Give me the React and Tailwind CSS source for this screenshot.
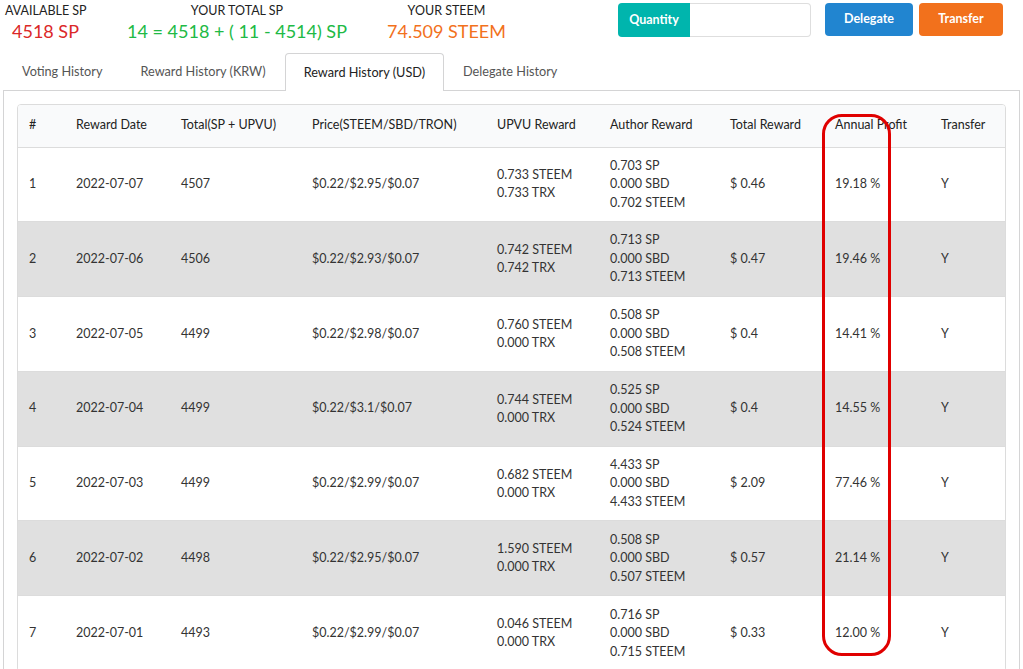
import React from "react"

const ROWS = [
  { n: 1, date: "2022-07-07", total: "4507", price: "$0.22/$2.95/$0.07", upvu: ["0.733 STEEM", "0.733 TRX"], author: ["0.703 SP", "0.000 SBD", "0.702 STEEM"], reward: "$ 0.46", profit: "19.18 %" },
  { n: 2, date: "2022-07-06", total: "4506", price: "$0.22/$2.93/$0.07", upvu: ["0.742 STEEM", "0.742 TRX"], author: ["0.713 SP", "0.000 SBD", "0.713 STEEM"], reward: "$ 0.47", profit: "19.46 %" },
  { n: 3, date: "2022-07-05", total: "4499", price: "$0.22/$2.98/$0.07", upvu: ["0.760 STEEM", "0.000 TRX"], author: ["0.508 SP", "0.000 SBD", "0.508 STEEM"], reward: "$ 0.4", profit: "14.41 %" },
  { n: 4, date: "2022-07-04", total: "4499", price: "$0.22/$3.1/$0.07", upvu: ["0.744 STEEM", "0.000 TRX"], author: ["0.525 SP", "0.000 SBD", "0.524 STEEM"], reward: "$ 0.4", profit: "14.55 %" },
  { n: 5, date: "2022-07-03", total: "4499", price: "$0.22/$2.99/$0.07", upvu: ["0.682 STEEM", "0.000 TRX"], author: ["4.433 SP", "0.000 SBD", "4.433 STEEM"], reward: "$ 2.09", profit: "77.46 %" },
  { n: 6, date: "2022-07-02", total: "4498", price: "$0.22/$2.95/$0.07", upvu: ["1.590 STEEM", "0.000 TRX"], author: ["0.508 SP", "0.000 SBD", "0.507 STEEM"], reward: "$ 0.57", profit: "21.14 %" },
  { n: 7, date: "2022-07-01", total: "4493", price: "$0.22/$2.99/$0.07", upvu: ["0.046 STEEM", "0.000 TRX"], author: ["0.716 SP", "0.000 SBD", "0.715 STEEM"], reward: "$ 0.33", profit: "12.00 %" },
]

const COLS = [
  { label: "#", w: "w-[47px]" },
  { label: "Reward Date", w: "w-[105px]" },
  { label: "Total(SP + UPVU)", w: "w-[131px]" },
  { label: "Price(STEEM/SBD/TRON)", w: "w-[185px]" },
  { label: "UPVU Reward", w: "w-[113px]" },
  { label: "Author Reward", w: "w-[120px]" },
  { label: "Total Reward", w: "w-[105px]" },
  { label: "Annual Profit", w: "w-[106px]" },
  { label: "Transfer", w: "w-[76px]" },
]

const TABS = ["Voting History", "Reward History (KRW)", "Reward History (USD)", "Delegate History"]

export default function App() {
  return (
    <div className="relative w-[1023px] h-[669px] overflow-hidden bg-white text-[#333] font-['Lato','Liberation_Sans',sans-serif]">
      {/* top summary */}
      <div className="flex items-start h-[46px]">
        <div className="pl-[5px] w-[110px] pt-[3px]">
          <div className="text-[12.5px] leading-[16px] text-[#222]">AVAILABLE SP</div>
          <div className="pl-[7px] text-[18px] leading-[24px] text-[#db2828]">4518 SP</div>
        </div>
        <div className="w-[254px] pt-[3px] flex flex-col items-center">
          <div className="text-[12.5px] leading-[16px] text-[#222]">YOUR TOTAL SP</div>
          <div className="text-[18px] leading-[24px] text-[#21ba45]">14 = 4518 + ( 11 - 4514) SP</div>
        </div>
        <div className="w-[165px] pt-[3px] flex flex-col items-center">
          <div className="text-[12.5px] leading-[16px] text-[#222]">YOUR STEEM</div>
          <div className="text-[18px] leading-[24px] text-[#f2711c]">74.509 STEEM</div>
        </div>
        <div className="ml-[89px] mt-[3px] flex h-[34px]">
          <div className="w-[72px] bg-[#00b5ad] text-white font-bold text-[12.5px] flex items-center justify-center rounded-l-[4px]">Quantity</div>
          <div className="w-[121px] border border-l-0 border-[#dedede] rounded-r-[4px]"></div>
        </div>
        <button className="ml-[14px] mt-[3px] w-[88px] h-[33px] bg-[#2185d0] text-white font-bold text-[12.5px] rounded-[4px]">Delegate</button>
        <button className="ml-[6px] mt-[3px] w-[84px] h-[33px] bg-[#f2711c] text-white font-bold text-[12.5px] rounded-[4px]">Transfer</button>
      </div>

      {/* tabs */}
      <div className="flex pl-[3px] mt-[7px] h-[37px] relative z-10">
        {TABS.map((t, i) => (
          <div
            key={t}
            className={
              i === 2
                ? "px-[18px] flex items-center text-[12.7px] text-[#222] bg-white border border-b-0 border-[#d4d4d5] rounded-t-[4px] h-[38px]"
                : "px-[18px] flex items-center text-[12.7px] text-[#555] h-[37px] border border-transparent"
            }
          >
            {t}
          </div>
        ))}
      </div>

      {/* content */}
      <div className="mx-[3px] w-[1017px] border border-[#d4d4d5] pt-[13px] pl-[13px] h-[600px]">
        <div className="w-[989px] border border-[#dcdcdc] rounded-[4px] overflow-hidden">
          <table className="w-full table-fixed border-collapse text-[12.5px]">
            <colgroup>
              {COLS.map((c) => (
                <col key={c.label} className={c.w} />
              ))}
            </colgroup>
            <thead>
              <tr className="bg-[#f9fafb] h-[42px]">
                {COLS.map((c) => (
                  <th key={c.label} className="text-left font-normal text-[#222] px-[11px] whitespace-nowrap">
                    {c.label}
                  </th>
                ))}
              </tr>
            </thead>
            <tbody>
              {ROWS.map((r) => (
                <tr key={r.n} className={(r.n % 2 === 0 ? "bg-[#e0e0e0]" : "bg-white") + " h-[74.8px] border-t border-[#dcdcdc]"}>
                  <td className="px-[11px]">{r.n}</td>
                  <td className="px-[11px]">{r.date}</td>
                  <td className="px-[11px]">{r.total}</td>
                  <td className="px-[11px]">{r.price}</td>
                  <td className="px-[11px] leading-[18px]">
                    {r.upvu.map((l) => (
                      <div key={l}>{l}</div>
                    ))}
                  </td>
                  <td className="px-[11px] leading-[18.5px]">
                    {r.author.map((l, j) => (
                      <div key={j}>{l}</div>
                    ))}
                  </td>
                  <td className="px-[11px]">{r.reward}</td>
                  <td className="px-[11px]">{r.profit}</td>
                  <td className="px-[11px]">Y</td>
                </tr>
              ))}
            </tbody>
          </table>
        </div>
      </div>

      {/* red annotation */}
      <div className="absolute left-[822px] top-[114px] w-[69px] h-[542px] border-[3px] border-[#e00000] rounded-[20px] pointer-events-none"></div>
    </div>
  )
}
